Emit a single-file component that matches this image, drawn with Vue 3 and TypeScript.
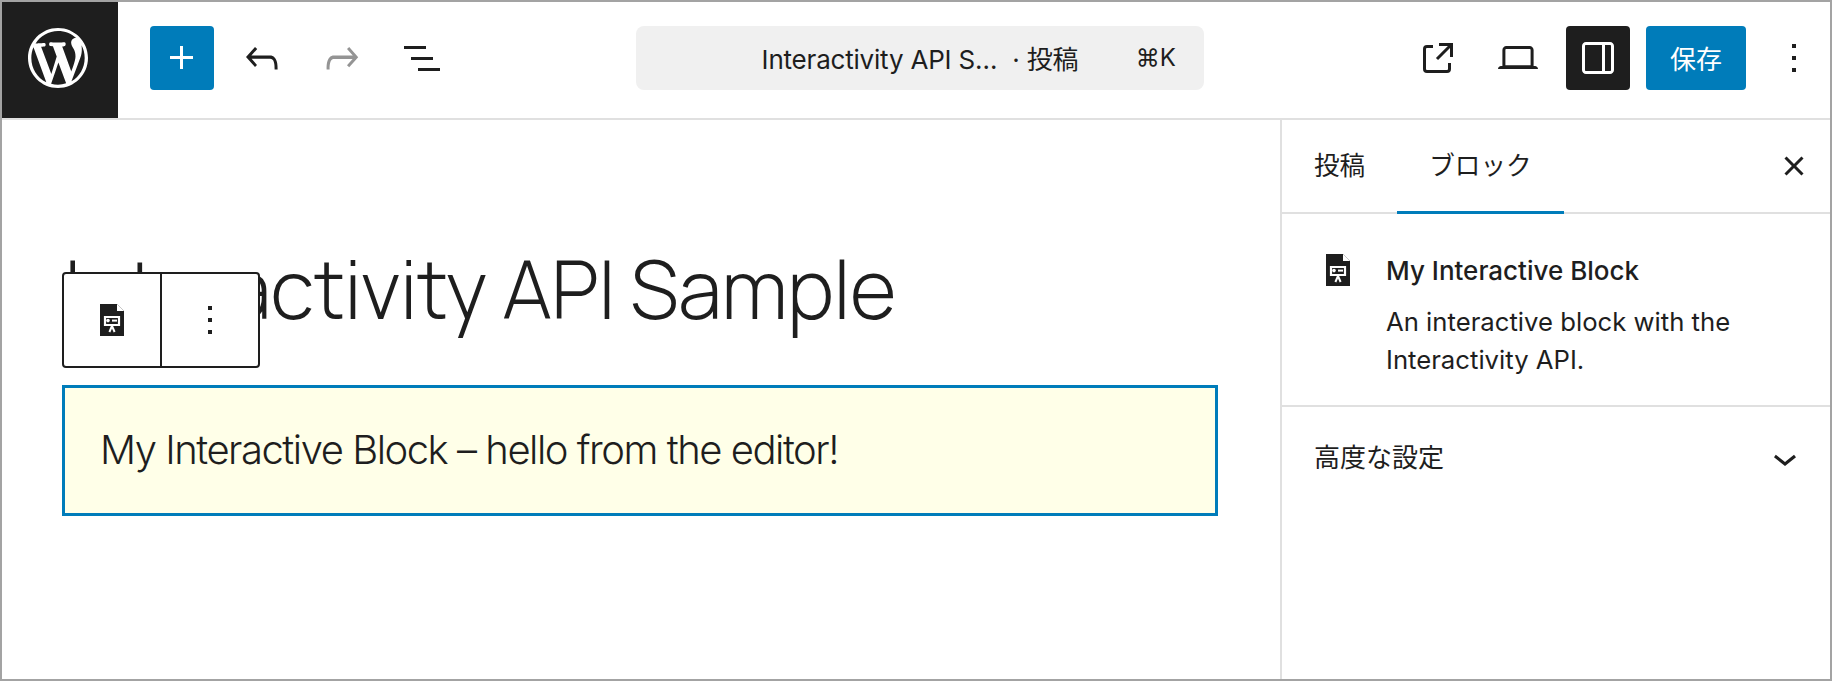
<script setup lang="ts">
</script>

<template>
  <div class="frame">
    <header class="top">
      <div class="logo">
        <svg width="60" height="60" viewBox="0 0 20 20"><path fill="#fff" d="M20 10c0-5.510-4.490-10-10-10C4.480 0 0 4.490 0 10c0 5.520 4.480 10 10 10 5.510 0 10-4.480 10-10zM7.780 15.370L4.370 6.220c.55-.02 1.170-.08 1.170-.08.5-.06.44-1.130-.06-1.110 0 0-1.450.11-2.370.11-.18 0-.37 0-.58-.01C4.120 2.690 6.890 1.030 10 1.030c2.330 0 4.450.87 6.030 2.340-.68-.11-1.650.39-1.650 1.580 0 .74.45 1.360.9 2.100.35.61.55 1.360.55 2.460 0 1.490-1.400 5-1.400 5l-3.030-8.370c.54-.02.82-.17.82-.17.5-.05.44-1.250-.06-1.220 0 0-1.440.12-2.380.12-.87 0-2.330-.12-2.330-.12-.5-.03-.56 1.200-.06 1.220l.92.08 1.260 3.410zM17.410 10c.24-.64.74-1.870.43-4.250.7 1.290 1.050 2.710 1.050 4.250 0 3.290-1.730 6.240-4.400 7.780.97-2.590 1.940-5.150 2.920-7.780zM6.100 18.090C3.120 16.650 1.110 13.530 1.110 10c0-1.300.23-2.480.72-3.590C3.250 10.300 4.670 14.200 6.100 18.090zm4.030-6.630l2.580 6.980c-.86.29-1.760.45-2.710.45-.79 0-1.570-.11-2.290-.33.81-2.380 1.620-4.740 2.420-7.100z"/></svg>
      </div>
      <div class="left-tools">
        <button class="btn primary sq" aria-label="追加">
          <svg width="48" height="48" viewBox="0 0 24 24"><path fill="#fff" d="M11 12.500V17.500H12.500V12.500H17.500V11H12.500V6H11V11H6V12.500H11Z"/></svg>
        </button>
        <button class="btn sq" aria-label="元に戻す">
          <svg width="48" height="48" viewBox="0 0 24 24"><path fill="#1e1e1e" d="M18.300 11.700c-.6-.6-1.400-.9-2.300-.9H6.700l2.900-3.300-1.100-1-4.500 5L8.500 16.500l1-1-2.700-3.100H16c.5 0 .9.200 1.300.5 1 1 1 3.400 1 4.500v.3h1.500v-.2c0-1.500 0-4.300-1.500-5.800z"/></svg>
        </button>
        <button class="btn sq" aria-label="やり直す">
          <svg width="48" height="48" viewBox="0 0 24 24"><path fill="#949494" d="M15.600 6.500l-1.100 1 2.900 3.300H8c-.9 0-1.700.3-2.300.9-1.400 1.500-1.400 4.200-1.400 5.800v.3h1.500v-.3c0-1.100 0-3.500 1-4.500.3-.3.7-.5 1.300-.5h9.200L14.500 15.600l1.100 1 4.500-5-4.500-5.100z"/></svg>
        </button>
        <button class="btn sq" aria-label="一覧">
          <svg width="48" height="48" viewBox="0 0 24 24"><path fill="#1e1e1e" d="M3 6h11v1.500H3V6zm3.500 5.500h11V13h-11v-1.500zM21 17H10v1.500h11V17z"/></svg>
        </button>
      </div>
      <div class="center">
        <div class="cmd">
          <span class="cmd-title">Interactivity API S… <span class="dot">·</span> 投稿</span>
          <span class="cmd-key">⌘K</span>
        </div>
      </div>
      <div class="right-tools">
        <button class="btn sq" aria-label="表示">
          <svg width="48" height="48" viewBox="0 0 24 24"><path fill="#1e1e1e" d="M19.500 4.500h-7V6h4.440l-5.970 5.970 1.060 1.060L18 7.060v4.440h1.500v-7zm-13 1a2 2 0 0 0-2 2v10a2 2 0 0 0 2 2h10a2 2 0 0 0 2-2v-3H17v3a.5.5 0 0 1-.5.5h-10a.5.5 0 0 1-.5-.5v-10a.5.5 0 0 1 .5-.5h3V5.500h-3z"/></svg>
        </button>
        <button class="btn sq" aria-label="プレビュー">
          <svg width="48" height="48" viewBox="0 0 24 24"><path fill="#1e1e1e" d="M20.500 16h-.7V8c0-1.100-.9-2-2-2H6.200c-1.100 0-2 .9-2 2v8h-.7c-.8 0-1.500.7-1.500 1.500h20c0-.8-.7-1.500-1.500-1.500zM5.700 8c0-.3.2-.5.5-.5h11.600c.3 0 .5.200.5.500v7.600H5.700V8z"/></svg>
        </button>
        <button class="btn sq dark" aria-label="設定">
          <svg width="48" height="48" viewBox="0 0 24 24"><path fill="#fff" d="M18 4H6c-1.100 0-2 .9-2 2v12c0 1.100.9 2 2 2h12c1.100 0 2-.9 2-2V6c0-1.100-.9-2-2-2zM5.500 18V6c0-.3.2-.5.5-.5h8v13H6c-.3 0-.5-.2-.5-.5zm13 0c0 .3-.2.5-.5.5h-2.500v-13H18c.3 0 .5.200.5.5v12z"/></svg>
        </button>
        <button class="btn primary save">保存</button>
        <button class="btn sq" aria-label="オプション">
          <svg width="48" height="48" viewBox="0 0 24 24"><path fill="#1e1e1e" d="M11 13h2v-2h-2v2zm0 6h2v-2h-2v2zm0-14v2h2V5h-2z"/></svg>
        </button>
      </div>
    </header>
    <div class="body">
      <main class="canvas">
        <h1 class="title">Interactivity API Sample</h1>
        <div class="toolbar">
          <div class="tb-cell tb-a">
            <svg width="48" height="48" viewBox="0 0 24 24"><path fill="#1e1e1e" d="M6 4h8.500L18 7.500V20H6V4z"/><path fill="#fff" d="M14.500 4L18 7.500H14.500z"/><path fill="none" stroke="#fff" stroke-width="1.100" d="M8.500 10.500h7v4h-7z"/><circle cx="10" cy="12.300" r=".9" fill="#fff"/><path fill="#fff" d="M12 11.800h2.500v1H12z"/><path fill="none" stroke="#fff" d="M12 15l-1.300 3M12 15l1.300 3"/></svg>
          </div>
          <div class="tb-cell tb-b">
            <svg width="48" height="48" viewBox="0 0 24 24"><path fill="#1e1e1e" d="M11 13h2v-2h-2v2zm0 6h2v-2h-2v2zm0-14v2h2V5h-2z"/></svg>
          </div>
        </div>
        <div class="block">My Interactive Block – hello from the editor!</div>
      </main>
      <aside class="side">
        <div class="tabs">
          <div class="tab">投稿</div>
          <div class="tab active">ブロック</div>
          <svg class="close" width="48" height="48" viewBox="0 0 24 24"><path fill="#1e1e1e" d="M12 13.060l3.712 3.713 1.061-1.060L13.061 12l3.712-3.712-1.060-1.060L12 10.938 8.288 7.227l-1.061 1.060L10.939 12l-3.712 3.712 1.060 1.061L12 13.061z"/></svg>
        </div>
        <div class="card">
          <svg class="card-icon" width="48" height="48" viewBox="0 0 24 24"><path fill="#1e1e1e" d="M6 4h8.500L18 7.500V20H6V4z"/><path fill="#fff" d="M14.500 4L18 7.500H14.500z"/><path fill="none" stroke="#fff" stroke-width="1.100" d="M8.500 10.500h7v4h-7z"/><circle cx="10" cy="12.300" r=".9" fill="#fff"/><path fill="#fff" d="M12 11.800h2.500v1H12z"/><path fill="none" stroke="#fff" d="M12 15l-1.300 3M12 15l1.300 3"/></svg>
          <div class="card-text">
            <div class="card-title">My Interactive Block</div>
            <div class="card-desc">An interactive block with the Interactivity API.</div>
          </div>
        </div>
        <div class="advanced">
          <span>高度な設定</span>
          <svg class="chev" width="48" height="48" viewBox="0 0 24 24"><path fill="#1e1e1e" d="M17.500 11.600L12 16l-5.500-4.400.9-1.200L12 14l4.500-3.600 1 1.200z"/></svg>
        </div>
      </aside>
    </div>
  </div>
</template>

<style>
html, body { margin: 0; background: #fff; }
</style>

<style scoped>
* { box-sizing: border-box; }
.frame {
  width: 1832px; height: 681px; border: 2px solid #a3a3a3; background: #fff; overflow: hidden;
  display: flex; flex-direction: column; color: #1e1e1e;
  font-family: Inter, "Noto Sans CJK JP", sans-serif;
}
.top { height: 118px; flex: none; display: flex; align-items: flex-start; border-bottom: 2px solid #e0e0e0; }
.logo { width: 116px; height: 116px; padding: 0 4px 4px 0; background: #1e1e1e; display: flex; align-items: center; justify-content: center; flex: none; }
.left-tools { display: flex; align-items: center; gap: 16px; margin: 24px 0 0 32px; flex: none; }
.btn { border: 0; background: none; padding: 0; display: flex; align-items: center; justify-content: center; height: 64px; border-radius: 4px; font: inherit; color: inherit; }
.sq { width: 64px; }
.primary { background: #007cba; color: #fff; }
.dark { background: #1e1e1e; }
.center { flex: 1; display: flex; justify-content: center; margin-top: 24px; padding-right: 20px; }
.cmd { position: relative; width: 568px; height: 64px; padding-bottom: 2px; background: #f0f0f0; border-radius: 8px; display: flex; align-items: center; justify-content: center; font-size: 26px; }
.cmd-title { letter-spacing: -.2px; }
.dot { margin: 0 0 0 8px; }
.cmd-key { position: absolute; right: 28px; font-size: 24px; }
.right-tools { display: flex; align-items: center; gap: 16px; margin: 24px 4px 0 0; flex: none; }
.save { width: 100px; font-size: 26px; padding-bottom: 2px; }
.body { flex: 1; display: flex; min-height: 0; }
.canvas { flex: 1; position: relative; min-width: 0; padding: 0 60px; }
.title { margin: 121px 0 0 2px; font-family: Manrope, Inter, sans-serif; font-weight: 350; font-size: 80px; line-height: 96px; letter-spacing: -.6px; white-space: nowrap; }
.toolbar { position: absolute; left: 60px; top: 152px; display: flex; height: 96px; background: #fff; border: 2px solid #1e1e1e; border-radius: 4px; }
.tb-cell { display: flex; align-items: center; justify-content: center; height: 100%; }
.tb-a { width: 98px; border-right: 2px solid #1e1e1e; }
.tb-b { width: 96px; }
.block { margin-top: 48px; width: 1156px; height: 131px; border: 3px solid #007cba; background: #ffffe8; display: flex; align-items: center; padding: 0 0 2px 35px; font-family: Inter, sans-serif; font-weight: 300; font-size: 40px; letter-spacing: -1.48px; }
.side { width: 550px; flex: none; border-left: 2px solid #e0e0e0; }
.tabs { position: relative; height: 94px; display: flex; border-bottom: 2px solid #e0e0e0; font-size: 25.6px; }
.tab { height: 94px; display: flex; align-items: center; padding: 0 32px 8px; position: relative; }
.tab.active::after { content: ""; position: absolute; left: 0; right: 0; bottom: 0; height: 3px; background: #007cba; }
.close { position: absolute; right: 12px; top: 22px; }
.card { display: flex; padding: 32px 32px 0 32px; height: 193px; border-bottom: 2px solid #e0e0e0; }
.card-icon { flex: none; margin-right: 24px; }
.card-text { padding-top: 9px; }
.card-title { font-size: 26px; font-weight: 500; line-height: 32px; }
.card-desc { font-size: 25.7px; line-height: 38px; margin-top: 16px; width: 380px; }
.advanced { display: flex; justify-content: space-between; align-items: center; padding: 0 21px 0 32px; height: 97px; font-size: 26px; }
.chev { margin-top: 4px; }
</style>
